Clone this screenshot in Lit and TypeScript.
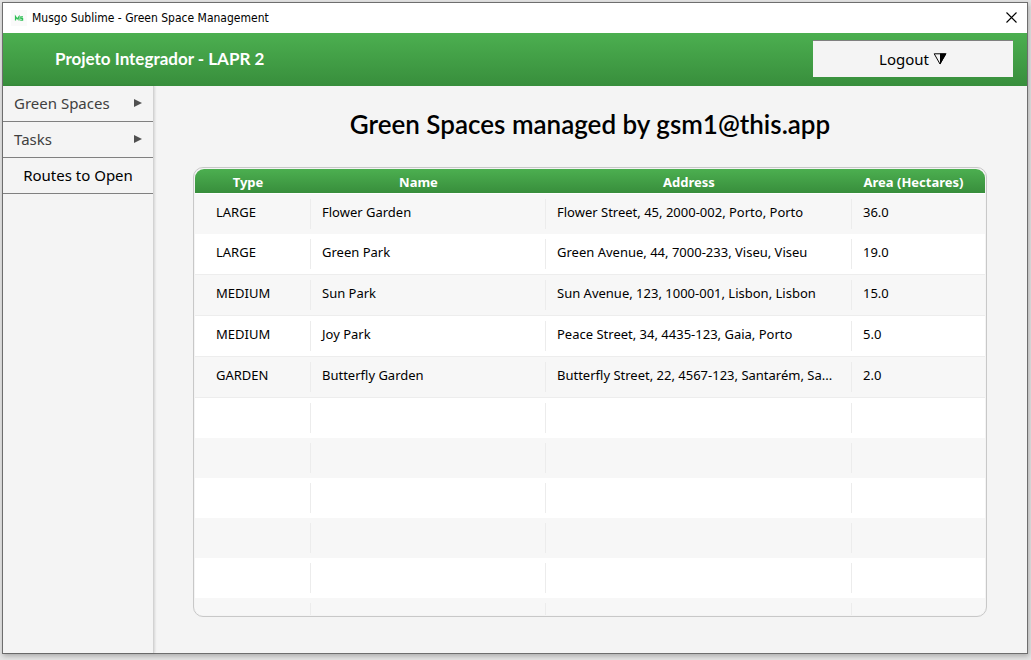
import { LitElement, html, css, svg } from "lit";
import { customElement, property } from "lit/decorators.js";

interface GreenSpace {
  type: string;
  name: string;
  address: string;
  area: string;
}

const SPACES: GreenSpace[] = [
  { type: "LARGE", name: "Flower Garden", address: "Flower Street, 45, 2000-002, Porto, Porto", area: "36.0" },
  { type: "LARGE", name: "Green Park", address: "Green Avenue, 44, 7000-233, Viseu, Viseu", area: "19.0" },
  { type: "MEDIUM", name: "Sun Park", address: "Sun Avenue, 123, 1000-001, Lisbon, Lisbon", area: "15.0" },
  { type: "MEDIUM", name: "Joy Park", address: "Peace Street, 34, 4435-123, Gaia, Porto", area: "5.0" },
  { type: "GARDEN", name: "Butterfly Garden", address: "Butterfly Street, 22, 4567-123, Santarém, Sa...", area: "2.0" },
];

const FILLER_ROWS = [0, 1, 2, 3, 4, 5];

@customElement("space-table")
export class SpaceTable extends LitElement {
  @property({ attribute: false }) spaces: GreenSpace[] = [];

  static styles = css`
    :host {
      display: block;
      box-sizing: border-box;
      overflow: hidden;
      border: 1px solid #c8c8c8;
      border-radius: 10px;
      padding: 1px;
      background: #f4f4f4;
    }
    .clip {
      height: 100%;
      overflow: hidden;
      border-radius: 9px;
      background: #ffffff;
    }
    table {
      width: 100%;
      table-layout: fixed;
      border-collapse: separate;
      border-spacing: 0;
      font-size: 13px;
      line-height: 18px;
    }
    .col-type { width: 116px; }
    .col-name { width: 235px; }
    .col-area { width: 133px; }
    thead {
      background: linear-gradient(#4caf50, #388e3c);
    }
    th {
      height: 24px;
      box-sizing: border-box;
      padding: 2px 20px 0 0;
      color: #ffffff;
      font-weight: 700;
      text-align: center;
      white-space: nowrap;
    }
    th:first-child, th:last-child { padding-right: 10px; }
    td {
      height: 40px;
      box-sizing: border-box;
      padding: 0 11px 4px;
      text-align: left;
      vertical-align: middle;
      white-space: nowrap;
      overflow: hidden;
      text-overflow: ellipsis;
      background: linear-gradient(#ececec, #ececec) right 5px / 1px 30px no-repeat;
      background-position: right 0 top 5px;
    }
    td:first-child { padding-left: 21px; }
    td:last-child { background-image: none; }
    tbody tr:nth-child(odd) { background-color: #f7f7f7; }
    .filled td {
      height: 41px;
      border-bottom: 1px solid #ededed;
    }
    .filled:first-child td {
      border-top: 1px solid #ffffff;
      border-bottom: 0;
    }
  `;

  render() {
    return html`
      <div class="clip">
        <table>
          <colgroup>
            <col class="col-type" /><col class="col-name" /><col /><col class="col-area" />
          </colgroup>
          <thead>
            <tr>
              <th scope="col">Type</th>
              <th scope="col">Name</th>
              <th scope="col">Address</th>
              <th scope="col">Area (Hectares)</th>
            </tr>
          </thead>
          <tbody>
            ${this.spaces.map(
              (s) => html`<tr class="filled"><td>${s.type}</td><td>${s.name}</td><td>${s.address}</td><td>${s.area}</td></tr>`
            )}
            ${FILLER_ROWS.map(() => html`<tr><td></td><td></td><td></td><td></td></tr>`)}
          </tbody>
        </table>
      </div>
    `;
  }
}

@customElement("app-root")
export class AppRoot extends LitElement {
  static styles = css`
    :host {
      display: flex;
      box-sizing: border-box;
      height: 100vh;
      padding: 2px 3px 6px 2px;
      background: #e4e4e4;
      color: #000000;
      font-family: "Noto Sans", "Open Sans", sans-serif;
    }
    .window {
      flex: 1;
      min-width: 0;
      display: flex;
      flex-direction: column;
      border: 1px solid #6e6e6e;
      background: #f4f4f4;
      box-shadow: 1px 2px 5px rgba(0, 0, 0, 0.25);
    }
    .titlebar {
      display: flex;
      align-items: center;
      gap: 5px;
      height: 30px;
      box-sizing: border-box;
      padding: 0 10px 1px 8px;
      background: #ffffff;
      font-family: "DejaVu Sans Condensed", "Open Sans", sans-serif;
      font-size: 12px;
      line-height: 16px;
    }
    .title { flex: 1; }
    .close {
      display: flex;
      padding: 0;
      border: 0;
      background: none;
    }
    svg { display: block; }
    .banner {
      display: flex;
      align-items: center;
      justify-content: space-between;
      height: 53px;
      box-sizing: border-box;
      padding: 0 14px 2px 52px;
      background: linear-gradient(#4caf50, #388e3c);
    }
    .brand {
      color: #ffffff;
      font-family: Lato, sans-serif;
      font-size: 17px;
      line-height: 24px;
      font-weight: 700;
    }
    .logout {
      display: flex;
      align-items: center;
      justify-content: center;
      gap: 4px;
      width: 200px;
      height: 37px;
      padding: 0 0 1px;
      border: 0;
      border-top: 1px solid #808080;
      background: #f4f4f4;
      color: #000000;
      font: inherit;
      font-size: 15px;
      line-height: 20px;
    }
    .body {
      flex: 1;
      min-height: 0;
      display: flex;
    }
    .sidebar {
      width: 150px;
      flex: none;
      border-right: 1px solid #d2d2d2;
      box-shadow: 1px 0 2px rgba(0, 0, 0, 0.12);
    }
    .item {
      display: flex;
      align-items: center;
      justify-content: space-between;
      box-sizing: border-box;
      width: 100%;
      height: 36px;
      padding: 0 11px 2px;
      border: 0;
      border-bottom: 1px solid #808080;
      background: none;
      color: #404040;
      font: inherit;
      font-size: 15px;
      line-height: 20px;
    }
    .action {
      justify-content: center;
      color: #000000;
    }
    main {
      flex: 1;
      min-width: 0;
      display: flex;
      flex-direction: column;
      gap: 24px;
      padding: 22px 40px 36px 39px;
    }
    h1 {
      margin: 0;
      padding-bottom: 2px;
      font-family: Lato, sans-serif;
      font-size: 26px;
      line-height: 33px;
      font-weight: 600;
      text-align: center;
    }
    space-table {
      flex: 1;
      min-height: 0;
    }
  `;

  private arrow() {
    return html`<svg width="9" height="8" viewBox="0 0 9 8" aria-hidden="true">${svg`<path d="M1 0 L9 4 L1 8 Z" fill="#505050" />`}</svg>`;
  }

  render() {
    return html`
      <div class="window">
        <header class="titlebar">
          <svg width="16" height="16" viewBox="0 0 16 16" aria-hidden="true">
            <rect width="16" height="16" fill="#fafafa" />
            <path d="M4.5 10.5 V6.5 L6.2 9 L8 6.5 V10.5" fill="none" stroke="#2fbf55" stroke-width="1.2" />
            <path d="M12 6.8 H9.8 V8.5 H11.6 V10.2 H9.2" fill="none" stroke="#2fbf55" stroke-width="1.2" />
          </svg>
          <span class="title">Musgo Sublime - Green Space Management</span>
          <button class="close" aria-label="Close">
            <svg width="11" height="11" viewBox="0 0 11 11"><path d="M0.5 0.5 L10.5 10.5 M10.5 0.5 L0.5 10.5" stroke="#000" stroke-width="1.1" /></svg>
          </button>
        </header>
        <div class="banner">
          <span class="brand">Projeto Integrador - LAPR 2</span>
          <button class="logout">
            <span>Logout</span>
            <svg width="14" height="12" viewBox="0 0 14 12" aria-hidden="true">
              <path d="M1.2 0.8 H12.8 L7 11 Z" fill="none" stroke="#000" />
              <path d="M7 0.5 H13.5 L7 11.5 Z" fill="#000" />
            </svg>
          </button>
        </div>
        <div class="body">
          <nav class="sidebar">
            <button class="item">Green Spaces ${this.arrow()}</button>
            <button class="item">Tasks ${this.arrow()}</button>
            <button class="item action">Routes to Open</button>
          </nav>
          <main>
            <h1>Green Spaces managed by gsm1@this.app</h1>
            <space-table .spaces=${SPACES}></space-table>
          </main>
        </div>
      </div>
    `;
  }
}
